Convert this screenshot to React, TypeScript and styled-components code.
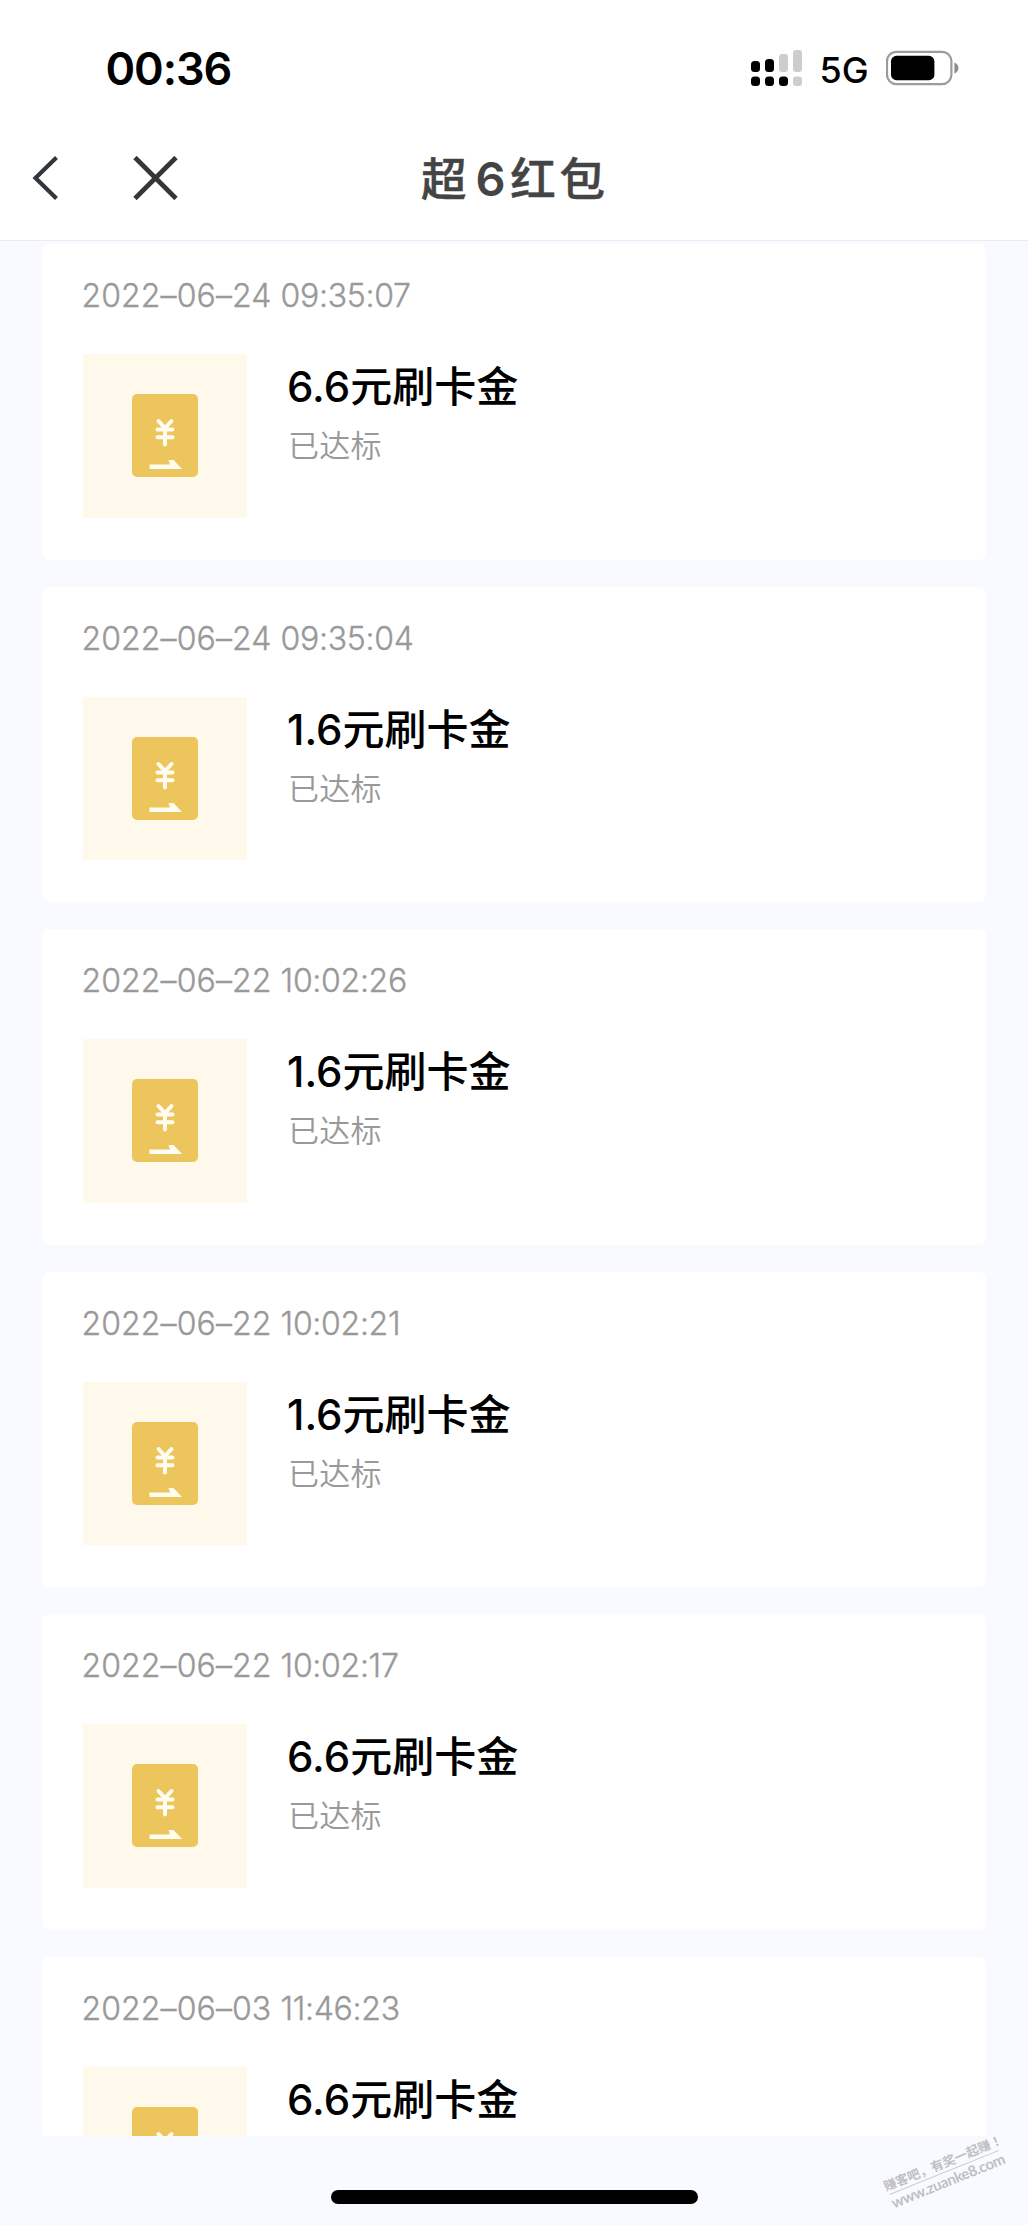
import React from "react";
import styled, { createGlobalStyle } from "styled-components";

const GlobalStyle = createGlobalStyle`
  * { box-sizing: border-box; }
  body {
    margin: 0;
    background: #f8faff;
    font-family: Inter, "Noto Sans CJK SC", sans-serif;
  }
`;

const Screen = styled.div`
  position: relative;
  display: flex;
  flex-direction: column;
  width: 1028px;
  height: 2225px;
  overflow: hidden;
  background: #f8faff;
`;

const StatusBar = styled.div`
  display: flex;
  flex: none;
  align-items: center;
  height: 136px;
  padding: 0 69px 0 105.5px;
  background: #fff;
  color: #000;
`;

const Clock = styled.time`
  flex: 1;
  padding-top: 1px;
  font-size: 45px;
  font-weight: 600;
  line-height: 54px;
  letter-spacing: -1.1px;
`;

const Network = styled.span`
  margin: 4px 17.5px 0 18px;
  font-size: 36px;
  font-weight: 500;
  line-height: 44px;
  letter-spacing: -0.1px;
`;

const NavBar = styled.header`
  display: grid;
  flex: none;
  grid-template-columns: 1fr auto 1fr;
  align-items: center;
  height: 105px;
  padding: 0 31px 20px;
  background: #fff;
  border-bottom: 1px solid #ececf0;
`;

const NavActions = styled.div`
  display: flex;
  align-items: center;
  gap: 74px;
`;

const IconButton = styled.button`
  display: flex;
  padding: 0;
  border: 0;
  background: none;
`;

const Title = styled.h1`
  margin: 0;
  padding: 2px 0 0 2px;
  color: #444;
  font-size: 45.5px;
  font-weight: 500;
  line-height: 60px;
  letter-spacing: 3.8px;
  white-space: nowrap;
  -webkit-text-stroke: 0.5px #444;
`;

const TitleDigit = styled.span`
  margin: 0 1px 0 5px;
  font-size: 47px;
  font-weight: 600;
  -webkit-text-stroke: 0;
`;

const RecordList = styled.main`
  display: flex;
  flex-direction: column;
  gap: 27px;
  height: 1895px;
  padding: 3px 42px 0 41.5px;
  overflow: hidden;
`;

const Card = styled.article`
  flex: none;
  height: 315.5px;
  padding: 32px 41px 0;
  border-radius: 8px;
  background: #fff;
`;

const Timestamp = styled.time`
  display: block;
  height: 78px;
  margin-left: -1px;
  color: #999;
  font-size: 32px;
  font-weight: 300;
  font-feature-settings: "calt" 0;
  line-height: 40px;
  letter-spacing: 0.1px;
  white-space: nowrap;
  -webkit-text-stroke: 0.35px #999;
`;

const TimeOfDay = styled.span`
  letter-spacing: -0.3px;
`;

const CardBody = styled.div`
  display: flex;
  gap: 40.5px;
`;

const Thumb = styled.div`
  display: flex;
  flex: none;
  align-items: center;
  justify-content: center;
  width: 164px;
  height: 163.5px;
  background: #fef9eb;
`;

const Details = styled.div`
  display: flex;
  flex-direction: column;
  padding-top: 6px;
`;

const Name = styled.h2`
  margin: 0;
  color: #000;
  font-size: 42px;
  font-weight: 500;
  line-height: 54px;
  white-space: nowrap;
`;

const State = styled.p`
  margin: 12px 0 0 1px;
  color: #999;
  font-size: 31px;
  font-weight: 350;
  line-height: 40px;
  letter-spacing: 0.3px;
`;

const HomeArea = styled.footer`
  display: flex;
  flex: 1;
  justify-content: center;
  padding-top: 54px;
`;

const HomeIndicator = styled.div`
  width: 367px;
  height: 14px;
  border-radius: 7px;
  background: #000;
`;

const Watermark = styled.div`
  position: absolute;
  left: 885px;
  top: 2154px;
  width: 118px;
  color: #bebfc2;
  transform: rotate(-22deg);
`;

const WatermarkSlogan = styled.div`
  border-bottom: 1px solid #c9cacd;
  font-family: "Noto Sans CJK SC", sans-serif;
  font-size: 12.7px;
  font-weight: 700;
  line-height: 18px;
  text-indent: -2px;
  white-space: nowrap;
`;

const Exclamation = styled.span`
  font-family: "Noto Sans CJK TC", sans-serif;
`;

const WatermarkSite = styled.div`
  font-family: Lato, sans-serif;
  font-size: 15px;
  font-weight: 700;
  line-height: 17px;
  letter-spacing: -0.4px;
  text-indent: -1px;
  white-space: nowrap;
`;

function Signal() {
  return (
    <svg width="51" height="36" viewBox="0 0 51 36">
      <g fill="#000">
        <rect x="0" y="11" width="9" height="11" rx="3.5" />
        <rect x="14" y="9" width="9" height="13" rx="3.5" />
        <rect x="0" y="26.5" width="9" height="9.5" rx="3.5" />
        <rect x="14" y="26.5" width="9" height="9.5" rx="3.5" />
        <rect x="28" y="26.5" width="9" height="9.5" rx="3.5" />
      </g>
      <g fill="#cdcdcd">
        <rect x="28" y="4" width="9" height="18" rx="3" />
        <rect x="42" y="0" width="9" height="22" rx="3" />
        <rect x="42" y="26.5" width="9" height="9.5" rx="3" />
      </g>
    </svg>
  );
}

function Battery() {
  return (
    <svg width="73" height="36" viewBox="0 0 73 36">
      <rect x="1" y="1.8" width="64.4" height="32.4" rx="9.5" fill="none" stroke="#9b9b9b" strokeWidth="2.2" />
      <rect x="5" y="5.8" width="43.4" height="24.4" rx="5.5" fill="#000" />
      <path d="M68.4 12.4c2.5 1 4.1 3.2 4.1 5.6s-1.600 4.600-4.100 5.600z" fill="#8d8d8d" />
    </svg>
  );
}

function Voucher() {
  return (
    <svg width="66" height="83" viewBox="0 0 66 83">
      <rect width="66" height="83" rx="5" fill="#edc55d" />
      <g fill="none" stroke="#fffdf2" strokeWidth="4" strokeLinecap="round">
        <path d="M26.500 27l6.500 7 6.500-7M33 34v16.500M25.500 35.500h15M25.500 43.300h15" />
      </g>
      <path d="M17.500 70.500h20.500l-1.500-4.500h5l8.500 9H17.500z" fill="#fffdf2" />
    </svg>
  );
}

interface CardRecord {
  day: string;
  time: string;
  name: string;
  state?: string;
}

const records: CardRecord[] = [
  { day: "2022–06–24", time: "09:35:07", name: "6.6元刷卡金", state: "已达标" },
  { day: "2022–06–24", time: "09:35:04", name: "1.6元刷卡金", state: "已达标" },
  { day: "2022–06–22", time: "10:02:26", name: "1.6元刷卡金", state: "已达标" },
  { day: "2022–06–22", time: "10:02:21", name: "1.6元刷卡金", state: "已达标" },
  { day: "2022–06–22", time: "10:02:17", name: "6.6元刷卡金", state: "已达标" },
  { day: "2022–06–03", time: "11:46:23", name: "6.6元刷卡金" },
];

export default function App() {
  return (
    <Screen>
      <GlobalStyle />
      <StatusBar>
        <Clock>00:36</Clock>
        <Signal />
        <Network>5G</Network>
        <Battery />
      </StatusBar>
      <NavBar>
        <NavActions>
          <IconButton aria-label="返回">
            <svg width="28" height="44" viewBox="0 0 28 44" fill="none" stroke="#30363b" strokeWidth="4.2">
              <path d="M25.500 1.500L4.500 22l21 20.500" />
            </svg>
          </IconButton>
          <IconButton aria-label="关闭">
            <svg width="45" height="44" viewBox="0 0 45 44" fill="none" stroke="#363636" strokeWidth="4.800">
              <path d="M2 1.500l41 41M43 1.500l-41 41" />
            </svg>
          </IconButton>
        </NavActions>
        <Title>
          超<TitleDigit>6</TitleDigit>红包
        </Title>
      </NavBar>
      <RecordList>
        {records.map((record) => (
          <Card key={record.day + record.time}>
            <Timestamp>
              {record.day} <TimeOfDay>{record.time}</TimeOfDay>
            </Timestamp>
            <CardBody>
              <Thumb>
                <Voucher />
              </Thumb>
              <Details>
                <Name>{record.name}</Name>
                {record.state && <State>{record.state}</State>}
              </Details>
            </CardBody>
          </Card>
        ))}
      </RecordList>
      <HomeArea>
        <HomeIndicator />
      </HomeArea>
      <Watermark>
        <WatermarkSlogan>
          赚客吧，有奖一起赚<Exclamation>！</Exclamation>
        </WatermarkSlogan>
        <WatermarkSite>www.zuanke8.com</WatermarkSite>
      </Watermark>
    </Screen>
  );
}
